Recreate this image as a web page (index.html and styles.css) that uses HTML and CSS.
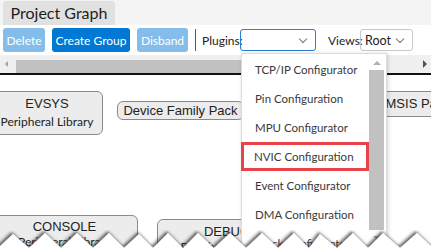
FILE: index.html
```html
<!DOCTYPE html>
<html lang="en">
<head>
  <meta charset="UTF-8" />
  <title>Project Graph</title>
  <link rel="stylesheet" href="styles.css">
</head>
<body>
  <div class="tabs">
    <div class="tab">Project Graph</div>
  </div>

  <div class="toolbar">
    <button class="btn off del">Delete</button>
    <button class="btn create">Create Group</button>
    <button class="btn off disband">Disband</button>
    <div class="sep"></div>
    <span class="label plugins-label">Plugins:</span>
    <div class="select plugins focus"><span></span><i class="chev"></i></div>
    <span class="label views-label">Views:</span>
    <div class="select views"><span>Root</span><i class="chev"></i></div>
  </div>

  <div class="hscroll">
    <span class="arrow-left"></span>
    <div class="thumb"></div>
    <span class="arrow-right"></span>
  </div>

  <div class="canvas">
    <div class="node evsys">
      <div class="title">EVSYS</div>
      <div class="sub">Peripheral Library</div>
    </div>
    <div class="node dfp"><div class="title">Device Family Pack</div></div>
    <div class="node cmsis"><div class="title">CMSIS Pack</div></div>
    <div class="node console">
      <div class="title">CONSOLE</div>
      <div class="sub">Peripheral Library</div>
    </div>
    <div class="node debug">
      <div class="title">DEBUG</div>
      <div class="sub">Peripheral Library</div>
    </div>
  </div>

  <div class="menu">
    <ul>
      <li>TCP/IP Configurator</li>
      <li>Pin Configuration</li>
      <li>MPU Configurator</li>
      <li class="hit">NVIC Configuration</li>
      <li>Event Configurator</li>
      <li>DMA Configuration</li>
      <li>Clock Configurator</li>
    </ul>
    <div class="vscroll">
      <span class="arrow-up"></span>
      <div class="vthumb"></div>
      <span class="arrow-down"></span>
    </div>
  </div>

  <!-- torn edge at the bottom of the screenshot -->
  <svg class="tear" width="431" height="20" viewBox="0 0 431 20">
    <defs>
      <filter id="shade" x="-10%" y="-50%" width="120%" height="200%">
        <feDropShadow dx="-1.5" dy="-2" stdDeviation="1.8" flood-color="#333" flood-opacity="0.75"/>
      </filter>
    </defs>
    <polygon filter="url(#shade)" fill="#fff"
      points="-20,20 -2,18 13,4 29,18 45,3 61,18 77,3 93,18 109,3 124,18 139,4 153,18 168,3 183,18 198,3 214,18 230,3 246,18 262,3 278,18 294,3 309,18 320,4 337,18 353,3 368,18 383,3 400,18 417,3 433,18 450,20"/>
  </svg>
</body>
</html>
```

FILE: styles.css
```css
body {
  margin: 0;
  width: 431px;
  height: 249px;
  overflow: hidden;
  position: relative;
  background: #fff;
  font-family: 'Segoe UI', Lato, sans-serif;
  color: #222;
}

.tabs {
  height: 25px;
  background: #f4f4f4;
  padding-left: 3px;
  display: flex;
  align-items: flex-end;
}
.tab {
  height: 24px;
  width: 112px;
  background: #e1e1e1;
  border-radius: 4px 4px 0 0;
  font-size: 16px;
  line-height: 24px;
  text-align: center;
  color: #1e1e1e;
}

.toolbar {
  height: 30px;
  display: flex;
  align-items: center;
  padding-left: 3px;
}
.btn {
  height: 24px;
  border: none;
  border-radius: 3px;
  background: #0078d4;
  color: #fff;
  font-family: inherit;
  font-size: 12px;
  padding: 0;
  white-space: nowrap;
  margin-left: 7px;
}
.btn.off {
  background: #84bdea;
}
.del {
  width: 42px;
  margin-left: 0;
}
.create {
  width: 78px;
}
.disband {
  width: 51px;
}
.sep {
  width: 1px;
  height: 22px;
  margin-left: 7px;
  background: #0e6fc0;
}
.label {
  font-size: 12px;
  color: #222;
  white-space: nowrap;
}
.plugins-label {
  width: 38px;
  margin-left: 6px;
}
.views-label {
  width: 32px;
  margin-left: 12px;
}
.select {
  height: 22px;
  border: 1px solid #c8c8c8;
  border-radius: 3px;
  display: flex;
  align-items: center;
  justify-content: space-between;
  padding: 0 9px 0 4px;
  font-size: 12.5px;
  box-sizing: border-box;
}
.select.plugins {
  width: 76px;
}
.select.focus {
  border-color: #2a7fce;
}
.select.views {
  width: 53px;
}
.chev {
  width: 5px;
  height: 5px;
  border-right: 1px solid #777;
  border-bottom: 1px solid #777;
  transform: rotate(45deg);
  margin-top: -3px;
}

.hscroll {
  height: 18px;
  background: #f0f0f0;
  border-bottom: 2px solid #111;
  display: flex;
  align-items: center;
}
.arrow-left {
  width: 0;
  height: 0;
  border-top: 3px solid transparent;
  border-bottom: 3px solid transparent;
  border-right: 3px solid #a3a3a3;
  margin: 0 8px 0 5px;
}
.thumb {
  width: 330px;
  height: 13px;
  margin-top: 4px;
  background: #c1c1c1;
}
.arrow-right {
  width: 0;
  height: 0;
  border-top: 4px solid transparent;
  border-bottom: 4px solid transparent;
  border-left: 4px solid #505050;
  margin-left: auto;
  margin-right: 4px;
}

.canvas {
  position: relative;
  height: 174px;
}
.node {
  position: absolute;
  background: #ececec;
  border: 1px solid #8a8a8a;
  border-radius: 6px;
  text-align: center;
  box-sizing: border-box;
  white-space: nowrap;
  overflow: hidden;
}
.node .title {
  font-family: 'Liberation Sans', Arial, sans-serif;
  font-size: 13px;
  color: #222;
}
.node .sub {
  font-size: 12px;
  color: #222;
}
.evsys {
  left: -9px;
  top: 16px;
  width: 112px;
  height: 44px;
  padding-top: 4px;
}
.evsys .sub {
  margin-top: 3px;
}
.dfp {
  left: 117px;
  top: 26px;
  width: 127px;
  height: 19px;
  line-height: 17px;
}
.cmsis {
  left: 363px;
  top: 16px;
  width: 100px;
  height: 26px;
  line-height: 24px;
}
.console {
  left: -9px;
  top: 140px;
  width: 147px;
  height: 45px;
  padding-top: 3px;
}
.debug {
  left: 157px;
  top: 144px;
  width: 140px;
  height: 45px;
  padding-top: 4px;
}

.menu {
  position: absolute;
  left: 241px;
  top: 53px;
  width: 144px;
  height: 200px;
  background: #fff;
  border: 1px solid #dcdcdc;
  box-shadow: 1px 1px 4px rgba(0, 0, 0, 0.18);
  display: flex;
}
.menu ul {
  list-style: none;
  margin: 0;
  padding: 0;
  flex: 1;
}
.menu li {
  height: 29px;
  line-height: 29px;
  padding-left: 13px;
  font-size: 11.5px;
  color: #3a3a3a;
  box-sizing: border-box;
  white-space: nowrap;
}
.menu li:first-child {
  margin-top: 1px;
}
.menu li.hit {
  border: 3px solid #e8424a;
  line-height: 23px;
  padding-left: 10px;
  margin-left: -1px;
}
.vscroll {
  width: 15px;
  margin-right: 2px;
  display: flex;
  flex-direction: column;
  align-items: center;
}
.arrow-up, .arrow-down {
  width: 0;
  height: 0;
  border-left: 4px solid transparent;
  border-right: 4px solid transparent;
}
.arrow-up {
  border-bottom: 4px solid #b0b0b0;
  margin: 7px 0 5px;
}
.arrow-down {
  border-top: 4px solid #b0b0b0;
  margin-top: 6px;
}
.vthumb {
  width: 15px;
  height: 160px;
  background: #c1c1c1;
}

.tear {
  position: absolute;
  left: 0;
  bottom: -1px;
}
```
